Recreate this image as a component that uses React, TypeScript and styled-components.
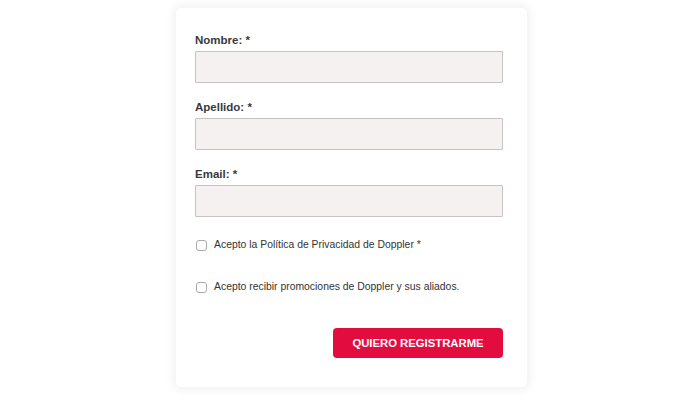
import React from "react";
import styled, { createGlobalStyle } from "styled-components";

const Global = createGlobalStyle`
  html, body { margin: 0; padding: 0; background: #ffffff; }
  body { font-family: "Liberation Sans", Arial, sans-serif; }
`;

const Page = styled.div`
  width: 700px;
  height: 400px;
  box-sizing: border-box;
  padding: 8px 0 0 176px;
`;

const Card = styled.form`
  width: 351px;
  height: 379px;
  box-sizing: border-box;
  background: #fff;
  border-radius: 5px;
  box-shadow: 0 0 10px 3px rgba(0, 0, 0, 0.06);
  padding: 26px 24px 0 19px;
  display: flex;
  flex-direction: column;
`;

const Field = styled.div`
  display: flex;
  flex-direction: column;
  margin-bottom: 18px;
`;

const Label = styled.label`
  font-size: 11.5px;
  font-weight: bold;
  color: #3a3a3a;
  line-height: 13px;
  margin-bottom: 4px;
`;

const Input = styled.input`
  height: 32px;
  box-sizing: border-box;
  background: #f5f1f0;
  border: 1px solid #c6c3c2;
  border-radius: 1px;
  outline: none;
`;

const CheckRow = styled.label<{ $mt: number }>`
  display: flex;
  align-items: center;
  gap: 7px;
  margin-top: ${(p) => p.$mt}px;
  font-size: 10.4px;
  color: #333;
  line-height: 12px;
`;

const Box = styled.span`
  width: 11px;
  height: 11px;
  box-sizing: border-box;
  border: 1px solid #aaa;
  border-radius: 3px;
  background: #fff;
  margin-left: 1px;
`;

const Actions = styled.div`
  display: flex;
  justify-content: flex-end;
  margin-top: 35px;
`;

const Button = styled.button`
  width: 170px;
  height: 30px;
  border: none;
  border-radius: 4px;
  background: #e30c3f;
  color: #fff;
  font-family: "Liberation Sans", Arial, sans-serif;
  font-weight: bold;
  font-size: 11.3px;
  cursor: pointer;
`;

export default function App() {
  return (
    <>
      <Global />
      <Page>
        <Card>
          <Field>
            <Label>Nombre: *</Label>
            <Input />
          </Field>
          <Field>
            <Label>Apellido: *</Label>
            <Input />
          </Field>
          <Field>
            <Label>Email: *</Label>
            <Input />
          </Field>
          <CheckRow $mt={4}>
            <Box />
            Acepto la Política de Privacidad de Doppler *
          </CheckRow>
          <CheckRow $mt={30}>
            <Box />
            Acepto recibir promociones de Doppler y sus aliados.
          </CheckRow>
          <Actions>
            <Button type="button">QUIERO REGISTRARME</Button>
          </Actions>
        </Card>
      </Page>
    </>
  );
}
